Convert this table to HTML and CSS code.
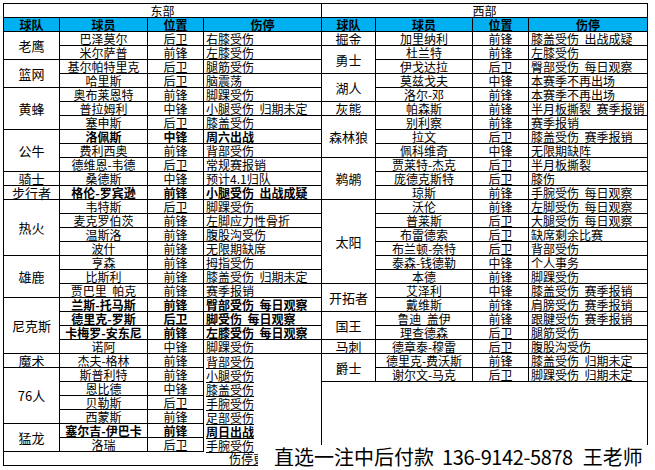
FILE: index.html
```html
<!DOCTYPE html>
<html lang="zh-CN">
<head>
<meta charset="utf-8">
<title>NBA伤停</title>
<link rel="stylesheet" href="styles.css">
</head>
<body>
<div class="page">
<table class="sheet">
<colgroup>
<col class="w-team-l"><col class="w-player-l"><col class="w-pos"><col class="w-inj-l">
<col class="w-team-r"><col class="w-player-r"><col class="w-pos"><col class="w-inj-r">
</colgroup>
<tr class="title"><td colspan="4">东部</td><td colspan="4">西部</td></tr>
<tr class="head"><th>球队</th><th>球员</th><th>位置</th><th>伤停</th><th>球队</th><th>球员</th><th>位置</th><th>伤停</th></tr>

<tr><td class="team" rowspan="2">老鹰</td><td class="c">巴泽莫尔</td><td class="c">后卫</td><td class="l">右膝受伤</td>
<td class="team">掘金</td><td class="c">加里纳利</td><td class="c">前锋</td><td class="l">膝盖受伤&nbsp;&nbsp;出战成疑</td></tr>
<tr><td class="c">米尔萨普</td><td class="c">前锋</td><td class="l">左膝受伤</td>
<td class="team" rowspan="2">勇士</td><td class="c">杜兰特</td><td class="c">前锋</td><td class="l">左膝受伤</td></tr>
<tr><td class="team" rowspan="2">篮网</td><td class="c">基尔帕特里克</td><td class="c">后卫</td><td class="l">腿筋受伤</td>
<td class="c">伊戈达拉</td><td class="c">后卫</td><td class="l">臀部受伤&nbsp;&nbsp;每日观察</td></tr>
<tr><td class="c">哈里斯</td><td class="c">后卫</td><td class="l">脑震荡</td>
<td class="team" rowspan="2">湖人</td><td class="c">莫兹戈夫</td><td class="c">中锋</td><td class="l">本赛季不再出场</td></tr>
<tr><td class="team" rowspan="3">黄蜂</td><td class="c">奥布莱恩特</td><td class="c">前锋</td><td class="l">脚踝受伤</td>
<td class="c">洛尔-邓</td><td class="c">前锋</td><td class="l">本赛季不再出场</td></tr>
<tr><td class="c">普拉姆利</td><td class="c">中锋</td><td class="l">小腿受伤&nbsp;&nbsp;归期未定</td>
<td class="team">灰熊</td><td class="c">帕森斯</td><td class="c">前锋</td><td class="l">半月板撕裂&nbsp;&nbsp;赛季报销</td></tr>
<tr><td class="c">塞申斯</td><td class="c">后卫</td><td class="l">膝盖受伤</td>
<td class="team" rowspan="3">森林狼</td><td class="c">别利察</td><td class="c">前锋</td><td class="l">赛季报销</td></tr>
<tr><td class="team" rowspan="3">公牛</td><td class="c b">洛佩斯</td><td class="c b">中锋</td><td class="l b">周六出战</td>
<td class="c">拉文</td><td class="c">后卫</td><td class="l">膝盖受伤&nbsp;&nbsp;赛季报销</td></tr>
<tr><td class="c">费利西奥</td><td class="c">前锋</td><td class="l">背部受伤</td>
<td class="c">佩科维奇</td><td class="c">中锋</td><td class="l">无限期缺阵</td></tr>
<tr><td class="c">德维恩-韦德</td><td class="c">后卫</td><td class="l">常规赛报销</td>
<td class="team" rowspan="3">鹈鹕</td><td class="c">贾莱特-杰克</td><td class="c">后卫</td><td class="l">半月板撕裂</td></tr>
<tr><td class="team">骑士</td><td class="c">桑德斯</td><td class="c">中锋</td><td class="l">预计4.1归队</td>
<td class="c">庞德克斯特</td><td class="c">后卫</td><td class="l">膝伤</td></tr>
<tr><td class="team">步行者</td><td class="c b">格伦-罗宾逊</td><td class="c b">前锋</td><td class="l b">小腿受伤&nbsp;&nbsp;出战成疑</td>
<td class="c">琼斯</td><td class="c">前锋</td><td class="l">手腕受伤&nbsp;&nbsp;每日观察</td></tr>
<tr><td class="team" rowspan="4">热火</td><td class="c">韦特斯</td><td class="c">后卫</td><td class="l">脚踝受伤</td>
<td class="team" rowspan="6">太阳</td><td class="c">沃伦</td><td class="c">前锋</td><td class="l">左脚受伤&nbsp;&nbsp;每日观察</td></tr>
<tr><td class="c">麦克罗伯茨</td><td class="c">前锋</td><td class="l">左脚应力性骨折</td>
<td class="c">普莱斯</td><td class="c">后卫</td><td class="l">大腿受伤&nbsp;&nbsp;每日观察</td></tr>
<tr><td class="c">温斯洛</td><td class="c">前锋</td><td class="l">腹股沟受伤</td>
<td class="c">布雷德索</td><td class="c">后卫</td><td class="l">缺席剩余比赛</td></tr>
<tr><td class="c">波什</td><td class="c">前锋</td><td class="l">无限期缺席</td>
<td class="c">布兰顿-奈特</td><td class="c">后卫</td><td class="l">背部受伤</td></tr>
<tr><td class="team" rowspan="3">雄鹿</td><td class="c">亨森</td><td class="c">前锋</td><td class="l">拇指受伤</td>
<td class="c">泰森-钱德勒</td><td class="c">中锋</td><td class="l">个人事务</td></tr>
<tr><td class="c">比斯利</td><td class="c">前锋</td><td class="l">膝盖受伤&nbsp;&nbsp;归期未定</td>
<td class="c">本德</td><td class="c">前锋</td><td class="l">脚踝受伤</td></tr>
<tr><td class="c">贾巴里&nbsp;&nbsp;帕克</td><td class="c">前锋</td><td class="l">赛季报销</td>
<td class="team" rowspan="2">开拓者</td><td class="c">艾泽利</td><td class="c">中锋</td><td class="l">膝盖受伤&nbsp;&nbsp;赛季报销</td></tr>
<tr><td class="team" rowspan="4">尼克斯</td><td class="c b">兰斯-托马斯</td><td class="c b">前锋</td><td class="l b">臀部受伤&nbsp;&nbsp;每日观察</td>
<td class="c">戴维斯</td><td class="c">前锋</td><td class="l">肩膀受伤&nbsp;&nbsp;赛季报销</td></tr>
<tr><td class="c b">德里克-罗斯</td><td class="c b">后卫</td><td class="l b">脚受伤&nbsp;&nbsp;每日观察</td>
<td class="team" rowspan="2">国王</td><td class="c">鲁迪&nbsp;&nbsp;盖伊</td><td class="c">前锋</td><td class="l">跟腱受伤&nbsp;&nbsp;赛季报销</td></tr>
<tr><td class="c b">卡梅罗-安东尼</td><td class="c b">前锋</td><td class="l b">左膝受伤&nbsp;&nbsp;每日观察</td>
<td class="c">理查德森</td><td class="c">后卫</td><td class="l">腿筋受伤</td></tr>
<tr><td class="c">诺阿</td><td class="c">中锋</td><td class="l">脚踝受伤</td>
<td class="team">马刺</td><td class="c">德章泰-穆雷</td><td class="c">后卫</td><td class="l">腹股沟受伤</td></tr>
<tr><td class="team">魔术</td><td class="c">杰夫-格林</td><td class="c">前锋</td><td class="l open">背部受伤</td>
<td class="team" rowspan="2">爵士</td><td class="c">德里克-费沃斯</td><td class="c">前锋</td><td class="l">膝盖受伤&nbsp;&nbsp;归期未定</td></tr>
<tr><td class="team" rowspan="4">76人</td><td class="c">斯普利特</td><td class="c">前锋</td><td class="l open">小腿受伤</td>
<td class="c">谢尔文-马克</td><td class="c">后卫</td><td class="l">脚踝受伤&nbsp;&nbsp;归期未定</td></tr>
<tr><td class="c">恩比德</td><td class="c">中锋</td><td class="l open">膝盖受伤</td>
<td class="blank" colspan="4" rowspan="6"></td></tr>
<tr><td class="c">贝勒斯</td><td class="c">后卫</td><td class="l open">手腕受伤</td></tr>
<tr><td class="c">西蒙斯</td><td class="c">前锋</td><td class="l open">足部受伤</td></tr>
<tr><td class="team" rowspan="2">猛龙</td><td class="c b">塞尔吉-伊巴卡</td><td class="c b">前锋</td><td class="l b open">周日出战</td></tr>
<tr><td class="c">洛瑞</td><td class="c">后卫</td><td class="l open">手腕受伤</td></tr>
<tr><td class="foot" colspan="4">伤停更新时间</td></tr>
</table>

<div class="banner">直选一注中后付款<span class="phone">136-9142-5878</span>王老师</div>
</div>
</body>
</html>
```
FILE: styles.css
```css
* { box-sizing: border-box; }

body {
  margin: 0;
  background: #fff;
  color: #000;
  font-family: "Noto Sans CJK SC", "Noto Sans", sans-serif;
}

.page {
  position: relative;
  width: 655px;
  height: 470px;
  overflow: hidden;
  padding: 3px 0 0 3px;
}

.sheet {
  border-collapse: collapse;
  table-layout: fixed;
  width: 645px;
  font-size: 12px;
}

.w-team-l { width: 56px; }
.w-player-l { width: 88px; }
.w-pos { width: 56px; }
.w-inj-l { width: 118px; }
.w-team-r { width: 54px; }
.w-player-r { width: 97px; }
.w-inj-r { width: 119px; }

.sheet tr { height: 14px; }

.sheet td,
.sheet th {
  border: 1px solid #000;
  padding: 0;
  height: 14px;
  line-height: 12px;
  white-space: nowrap;
  vertical-align: bottom;
  font-weight: 400;
}

.title td {
  text-align: center;
  vertical-align: middle;
}

.head th {
  background: #00b0f0;
  font-weight: 700;
  text-align: center;
  vertical-align: middle;
}

.c {
  text-align: center;
  text-decoration: underline;
  text-underline-offset: 1px;
}

.l {
  text-align: left;
  padding-left: 2px !important;
  text-decoration: underline;
  text-underline-offset: 1px;
}

.sheet .b { font-weight: 700; }

.sheet .team {
  text-align: center;
  vertical-align: middle;
  font-size: 13px;
  line-height: 13px;
}

.sheet .open { border-bottom-style: hidden; }

.sheet .foot {
  text-align: left;
  padding-left: 225px;
  overflow: hidden;
  text-decoration: underline;
  text-underline-offset: 1px;
}

.blank { background: #fff; }

.banner {
  position: absolute;
  left: 258px;
  top: 445px;
  width: 397px;
  height: 25px;
  background: #fff;
  padding-left: 16px;
  font-size: 20px;
  line-height: 24px;
  white-space: nowrap;
}

.phone {
  margin: 0 10px 0 8px;
  letter-spacing: -0.4px;
}
```
